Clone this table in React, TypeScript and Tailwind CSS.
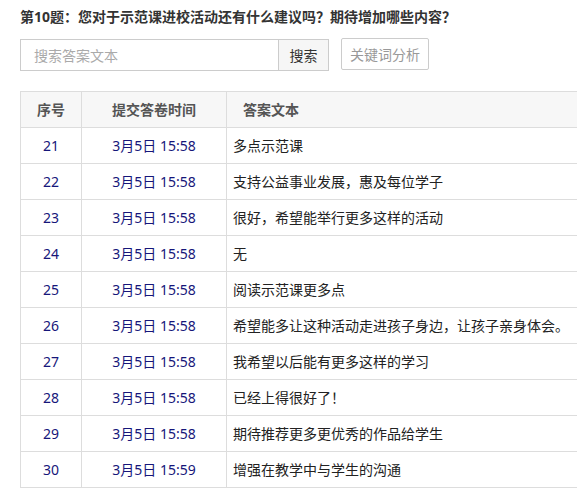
import React from "react";

const rows: [number, string, string][] = [
  [21, "3月5日 15:58", "多点示范课"],
  [22, "3月5日 15:58", "支持公益事业发展，惠及每位学子"],
  [23, "3月5日 15:58", "很好，希望能举行更多这样的活动"],
  [24, "3月5日 15:58", "无"],
  [25, "3月5日 15:58", "阅读示范课更多点"],
  [26, "3月5日 15:58", "希望能多让这种活动走进孩子身边，让孩子亲身体会。"],
  [27, "3月5日 15:58", "我希望以后能有更多这样的学习"],
  [28, "3月5日 15:58", "已经上得很好了！"],
  [29, "3月5日 15:58", "期待推荐更多更优秀的作品给学生"],
  [30, "3月5日 15:59", "增强在教学中与学生的沟通"],
];

export default function App() {
  return (
    <div
      className="w-[577px] h-[490px] overflow-hidden bg-white text-[14px] text-[#333]"
      style={{ fontFamily: '"Noto Sans", "Noto Sans CJK SC", sans-serif' }}
    >
      <div className="pl-[20px] pt-[7px]">
        <div className="font-bold leading-[20px] text-[14px] text-[#333]">
          第10题：您对于示范课进校活动还有什么建议吗？期待增加哪些内容？
        </div>
        <div className="mt-[12px] flex items-start">
          <div className="flex h-[32px]">
            <div className="w-[259px] h-[32px] border border-[#ccc] flex items-center pl-[13px] text-[#aaa]">
              搜索答案文本
            </div>
            <div className="w-[50px] h-[32px] border border-l-0 border-[#ccc] bg-[#f6f6f6] flex items-center justify-center text-[#333]">
              搜索
            </div>
          </div>
          <div className="ml-[12px] -mt-[1px] w-[88px] h-[32px] border border-[#ccc] rounded-[2px] flex items-center justify-center text-[#999] bg-white">
            关键词分析
          </div>
        </div>
        <div className="mt-[20px] w-[620px] border-l border-t border-[#ddd]">
          <div className="grid grid-cols-[61px_145px_1fr] h-[36px] bg-[#f7f7f7] border-b border-[#ddd] font-bold text-[#555]">
            <div className="border-r border-[#ddd] flex items-center justify-center">序号</div>
            <div className="border-r border-[#ddd] flex items-center justify-center">提交答卷时间</div>
            <div className="flex items-center pl-[16px]">答案文本</div>
          </div>
          {rows.map(([n, t, a]) => (
            <div key={n} className="grid grid-cols-[61px_145px_1fr] h-[36px] border-b border-[#ddd]">
              <div className="border-r border-[#ddd] flex items-center justify-center text-[#16167a]">{n}</div>
              <div className="border-r border-[#ddd] flex items-center justify-center text-[#16167a]">{t}</div>
              <div className="flex items-center pl-[6px] text-[#222]">{a}</div>
            </div>
          ))}
        </div>
      </div>
    </div>
  );
}
